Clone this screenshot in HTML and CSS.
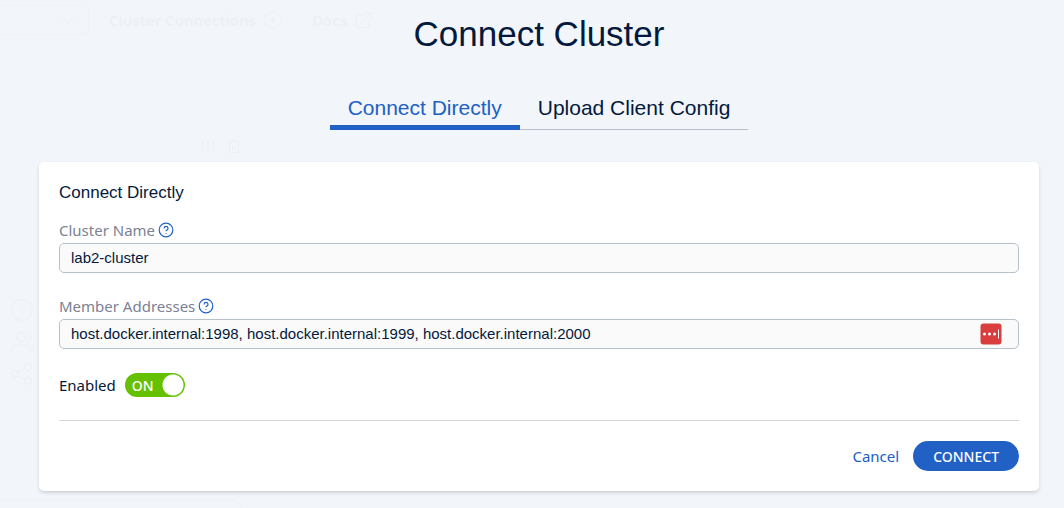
FILE: index.html
```html
<!DOCTYPE html>
<html lang="en">
<head>
<meta charset="utf-8">
<title>Connect Cluster</title>
<link rel="stylesheet" href="styles.css">
</head>
<body>
<div class="backdrop" aria-hidden="true">
  <div class="ghost ghost-select"><svg width="14" height="8" viewBox="0 0 14 8"><path d="M1 1l6 6 6-6"/></svg></div>
  <div class="ghost ghost-nav">
    <span class="ghost-item">Cluster Connections <svg width="18" height="18" viewBox="0 0 18 18"><circle cx="9" cy="9" r="8.4"/><path d="M9 5.500v7M5.500 9h7"/></svg></span>
    <span class="ghost-item">Docs <svg width="18" height="18" viewBox="0 0 18 18"><path d="M8 4H3a1.500 1.500 0 0 0-1.500 1.500v9.500A1.500 1.500 0 0 0 3 16.500h10a1.500 1.500 0 0 0 1.500-1.500v-5M7.500 10.500L16.500 1.500M11 1.500h5.500V7"/></svg></span>
  </div>
  <div class="ghost ghost-tools">
    <svg width="16" height="14" viewBox="0 0 16 14"><path d="M2.500 1v6M2.500 10v3M8 1v2.500M8 6.500V13M13.500 1v7M13.500 11v2M0 8.500h5M5.500 5h5M11 9.500h5"/></svg>
    <svg width="12" height="14" viewBox="0 0 12 14"><path d="M.5 3h11M3.500 3V1h5v2M1.500 3v9q0 1.500 1.500 1.500h6q1.500 0 1.500-1.500V3M4.500 6v5M7.500 6v5"/></svg>
  </div>
  <div class="ghost ghost-side">
    <svg width="22" height="22" viewBox="0 0 22 22"><circle cx="11" cy="11" r="10.300"/><path d="M11 10v5M11 6.500v1"/></svg>
    <svg width="24" height="22" viewBox="0 0 24 22"><circle cx="10" cy="6" r="4.500"/><path d="M1 21v-2q0-5 5-5h8q5 0 5 5v2M16 2q4 1 4 4t-4 4M19 14q4 1 4 5v2"/></svg>
    <svg width="22" height="22" viewBox="0 0 22 22"><circle cx="17" cy="4" r="3.500"/><circle cx="4" cy="11" r="3.500"/><circle cx="17" cy="18" r="3.500"/><path d="M7 9.500l7-4M7 12.500l7 4"/></svg>
  </div>
  <div class="ghost ghost-panel"></div>
</div>

<main class="dialog">
  <h1 class="title">Connect Cluster</h1>
  <div class="tabs" role="tablist">
    <button class="tab tab-active" type="button" role="tab" aria-selected="true">Connect Directly</button>
    <button class="tab" type="button" role="tab" aria-selected="false">Upload Client Config</button>
  </div>
  <form class="card">
    <h2 class="heading">Connect Directly</h2>
    <div class="field">
      <div class="label-row">
        <label for="name">Cluster Name</label>
        <svg class="help" viewBox="0 0 16 16"><circle cx="8" cy="8" r="6.800"/><path d="M6.200 6.400a1.900 1.900 0 1 1 2.600 1.700Q8 8.500 8 9.300M8 11v.8"/></svg>
      </div>
      <div class="control"><input id="name" class="input" type="text" value="lab2-cluster"></div>
    </div>
    <div class="field">
      <div class="label-row">
        <label for="members">Member Addresses</label>
        <svg class="help" viewBox="0 0 16 16"><circle cx="8" cy="8" r="6.800"/><path d="M6.200 6.400a1.900 1.900 0 1 1 2.600 1.700Q8 8.500 8 9.300M8 11v.8"/></svg>
      </div>
      <div class="control">
        <input id="members" class="input" type="text" value="host.docker.internal:1998, host.docker.internal:1999, host.docker.internal:2000">
        <svg class="vault" viewBox="0 0 22 22"><rect x=".5" y=".5" width="21" height="21" rx="3" fill="#d93d3d"/><g fill="#fff"><circle cx="4.500" cy="11" r="1.500"/><circle cx="9.500" cy="11" r="1.500"/><circle cx="14.500" cy="11" r="1.500"/><path d="M18 6.500h1v9h-1z"/></g></svg>
      </div>
    </div>
    <div class="enabled">
      <label for="enabled">Enabled</label>
      <span class="switch"><input id="enabled" class="switch-input" type="checkbox" role="switch" checked><span class="switch-text">ON</span></span>
    </div>
    <div class="actions">
      <button class="cancel" type="button">Cancel</button>
      <button class="connect" type="submit">CONNECT</button>
    </div>
  </form>
</main>
</body>
</html>
```
FILE: styles.css
```css
* { box-sizing: border-box; }

body {
  margin: 0;
  min-height: 100vh;
  position: relative;
  background: #f2f6fb;
  color: #04193c;
  font-family: "Noto Sans", sans-serif;
  font-size: 15px;
  line-height: 20px;
}

button { margin: 0; border: 0; background: none; font: inherit; cursor: pointer; }

/* Faded page behind the dialog */
.backdrop { position: absolute; inset: 0; overflow: hidden; pointer-events: none; color: #ecf0f4; }
.backdrop svg { fill: none; stroke: currentColor; stroke-width: 1; flex: none; }
.ghost { position: absolute; }
.ghost-select { left: -8px; top: 5px; width: 97px; height: 30px; padding: 10px 13px; border: 1px solid #eff2f7; border-radius: 5px; display: flex; justify-content: flex-end; }
.ghost-nav { left: 109px; top: 10px; display: flex; gap: 30px; font-weight: 600; }
.ghost-item { display: flex; align-items: center; gap: 8px; }
.ghost-tools { left: 200px; top: 139px; display: flex; gap: 12px; }
.ghost-side { left: 11px; top: 299px; display: flex; flex-direction: column; gap: 10px; }
.ghost-panel { left: -20px; top: 499px; width: 263px; height: 30px; border: 1px solid #eff2f7; border-radius: 14px; }

.dialog { position: relative; padding: 14px 25px 17px 39px; display: flex; flex-direction: column; align-items: center; }

.title { margin: 0; font: 400 35px/40px "Liberation Sans", Arial, sans-serif; }

.tabs { display: flex; margin-top: 36px; }
.tab {
  height: 40px;
  padding: 0 18px 4px;
  border-bottom: 1px solid #b7bec9;
  color: #04193c;
  font: 400 21px/35px "Liberation Sans", Arial, sans-serif;
}
.tab-active { padding-bottom: 0; border-bottom: 5px solid #2160c4; color: #2160c4; }

.card {
  width: 100%;
  margin-top: 32px;
  padding: 20px;
  border-radius: 5px;
  background: #fff;
  box-shadow: 0 2px 4px -1px rgba(0, 0, 0, .22);
}
.heading { margin: 0 0 16px; font: 400 17px/22px "Liberation Sans", Arial, sans-serif; }

.field { margin-bottom: 23px; }
.label-row { display: flex; align-items: center; gap: 3px; height: 20px; margin-bottom: 3px; color: #7c8193; }
.help { width: 16px; height: 16px; fill: none; stroke: #2160c4; stroke-width: 1.200; }
.control { position: relative; }
.input {
  display: block;
  width: 100%;
  height: 30px;
  padding: 0 11px 2px;
  border: 1px solid #b7c1cb;
  border-radius: 5px;
  background: #fafafa;
  color: #04193c;
  font: 400 15px/20px "Liberation Sans", Arial, sans-serif;
}
.vault { position: absolute; right: 17px; top: 4px; width: 22px; height: 22px; }

.enabled { display: flex; align-items: center; gap: 9px; height: 26px; }
.switch { position: relative; display: flex; width: 60px; height: 24px; }
.switch-input { appearance: none; width: 60px; height: 24px; margin: 0; border-radius: 12px; background: radial-gradient(circle at 48px 12px, #fff 10px, #65c100 11px); }
.switch-text { position: absolute; left: 7px; top: 3px; color: #fff; font-size: 14px; font-weight: 500; pointer-events: none; }

.actions { display: flex; justify-content: flex-end; align-items: center; gap: 14px; margin-top: 22px; padding-top: 20px; border-top: 1px solid #d5d8dc; }
.cancel { padding: 0; color: #2160c4; }
.connect { height: 30px; padding: 1px 20px 0; border-radius: 15px; background: #2160c4; color: #fff; font-size: 14px; font-weight: 500; }
```
